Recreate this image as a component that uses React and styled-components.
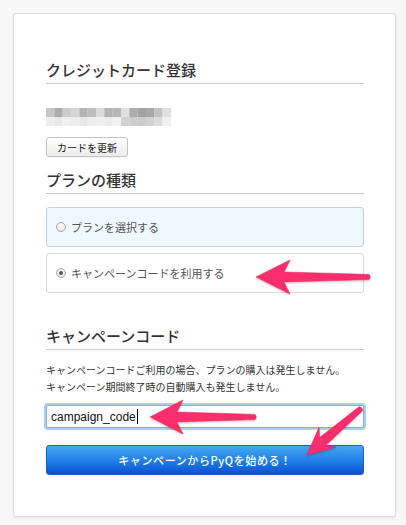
import React from "react"
import styled, { createGlobalStyle } from "styled-components"

const GlobalStyle = createGlobalStyle`
    html, body {
        margin: 0;
        padding: 0;
        background: #f7f7f7;
    }
    body {
        font-family: "Noto Sans CJK JP", "Noto Sans", sans-serif;
        color: #333;
    }
`

const Page = styled.div`
    position: relative;
    width: 406px;
    height: 525px;
    padding: 13px 10px 8px 13px;
    box-sizing: border-box;
`

const Card = styled.div`
    background: #fff;
    border: 1px solid #ddd;
    border-radius: 3px;
    box-shadow: 0 1px 2px rgba(0, 0, 0, 0.08);
    padding: 46px 31px 40px 32px;
    box-sizing: border-box;
    height: 504px;
    display: flex;
    flex-direction: column;
`

const Heading = styled.h2`
    margin: ${(p) => p.$top || 0}px 0 0 0;
    padding: 0 0 3px 0;
    font-size: 15px;
    line-height: 20px;
    font-weight: 500;
    color: #333;
    border-bottom: 1px solid #ccc;
`

const Blur = styled.svg`
    display: block;
    margin-top: 24px;
`

const SmallButton = styled.button`
    align-self: flex-start;
    margin-top: 11px;
    height: 20px;
    padding: 0 10px;
    font-family: inherit;
    font-size: 10px;
    color: #222;
    background: linear-gradient(#ffffff, #ececec);
    border: 1px solid #c4c4c4;
    border-radius: 3px;
    box-shadow: 0 1px 1px rgba(0, 0, 0, 0.05);
`

const OptionList = styled.div`
    margin-top: 13px;
    display: flex;
    flex-direction: column;
    gap: 6px;
`

const Option = styled.label`
    display: flex;
    align-items: center;
    gap: 5px;
    height: 40px;
    padding-left: 9px;
    box-sizing: border-box;
    border: 1px solid ${(p) => (p.$active ? "#bcd3ee" : "#dadada")};
    background: ${(p) => (p.$active ? "#f0f8ff" : "#fff")};
    border-radius: 3px;
    font-size: 11px;
    color: #555;
`

const Radio = styled.span`
    width: 8px;
    height: 8px;
    border-radius: 50%;
    border: 1px solid #aaa;
    background: radial-gradient(circle at 50% 35%, #fff, #ddd);
    display: flex;
    align-items: center;
    justify-content: center;

    &::after {
        content: "";
        width: 4px;
        height: 4px;
        border-radius: 50%;
        background: ${(p) => (p.$checked ? "#555" : "transparent")};
    }
`

const Note = styled.p`
    margin: 11px 0 0 0;
    font-size: 10px;
    line-height: 17px;
    color: #333;
`

const Field = styled.div`
    margin-top: 10px;
    height: 23px;
    box-sizing: border-box;
    border: 1px solid #7fb0ec;
    box-shadow: 0 0 0 2px #a9cdf6;
    border-radius: 2px;
    background: #fff;
    display: flex;
    align-items: center;
    padding-left: 4px;
    font-family: "Liberation Sans", Arial, sans-serif;
    font-size: 12px;
    color: #111;
`

const Caret = styled.span`
    width: 1px;
    height: 15px;
    background: #000;
    margin-left: 1px;
`

const SubmitButton = styled.button`
    margin-top: 17px;
    height: 30px;
    font-family: inherit;
    font-size: 11px;
    font-weight: 500;
    letter-spacing: 0.6px;
    color: #fff;
    background: linear-gradient(#42a9f1, #1f7ee6 55%, #0b4fd4);
    border: 1px solid #1c5fc8;
    border-radius: 3px;
`

const Arrows = styled.svg`
    position: absolute;
    top: 0;
    left: 0;
    pointer-events: none;
`

const blurTop = [0.78, 0.68, 0.8, 0.84, 0.7, 0.74, 0.86, 0.7, 0.72, 0.88, 0.68, 0.64, 0.66, 0.76, 0.88]
const blurBottom = [0.93, 0.91, 0.94, 0.93, 0.91, 0.93, 0.94, 0.92, 0.95, 0.82, 0.8, 0.8, 0.82, 0.86, 0.94]

const shade = (v) => {
    const c = Math.round(v * 255)
    return `rgb(${c},${c},${c})`
}

const CardNumber = () => (
    <Blur width="125" height="18" viewBox="0 0 125 18">
        {blurTop.map((v, i) => (
            <rect key={"t" + i} x={i * 8.33} y="0" width="8.4" height="9" fill={shade(v)} />
        ))}
        {blurBottom.map((v, i) => (
            <rect key={"b" + i} x={i * 8.33} y="9" width="8.4" height="9" fill={shade(v)} />
        ))}
    </Blur>
)

// skitch style arrow, pointing left with its tip at 0,0
const arrowPath = (len, head, wing) =>
    `M0 0 L${head} ${-wing} L${head - 6} -5 L${len} -2.6 Q${len + 2.5} 0 ${len} 2.6 L${head - 6} 5 L${head} ${wing} Z`

const Arrow = ({ x, y, angle, len, head, wing }) => (
    <path
        d={arrowPath(len, head, wing)}
        transform={`translate(${x} ${y}) rotate(${angle})`}
        fill="#fb2f6d"
        stroke="#e0205c"
        strokeWidth="0.5"
        strokeLinejoin="round"
    />
)

const App = () => (
    <Page>
        <GlobalStyle />
        <Card>
            <Heading>クレジットカード登録</Heading>
            <CardNumber />
            <SmallButton>カードを更新</SmallButton>

            <Heading $top={13}>プランの種類</Heading>
            <OptionList>
                <Option $active>
                    <Radio />
                    プランを選択する
                </Option>
                <Option>
                    <Radio $checked />
                    キャンペーンコードを利用する
                </Option>
            </OptionList>

            <Heading $top={33}>キャンペーンコード</Heading>
            <Note>
                キャンペーンコードご利用の場合、プランの購入は発生しません。
                <br />
                キャンペーン期間終了時の自動購入も発生しません。
            </Note>
            <Field>
                campaign_code
                <Caret />
            </Field>
            <SubmitButton>キャンペーンからPyQを始める！</SubmitButton>
        </Card>

        <Arrows width="406" height="525" viewBox="0 0 406 525">
            <defs>
                <filter id="arrowShadow" x="-20%" y="-20%" width="140%" height="140%">
                    <feDropShadow dx="0" dy="1" stdDeviation="1" floodColor="#000" floodOpacity="0.25" />
                </filter>
            </defs>
            <g filter="url(#arrowShadow)">
                <Arrow x={256} y={277} angle={0} len={113} head={34} wing={17} />
                <Arrow x={150} y={417} angle={0} len={105} head={33} wing={17} />
                <Arrow x={307} y={455} angle={-40.7} len={71} head={27} wing={13} />
            </g>
        </Arrows>
    </Page>
)

export default App
